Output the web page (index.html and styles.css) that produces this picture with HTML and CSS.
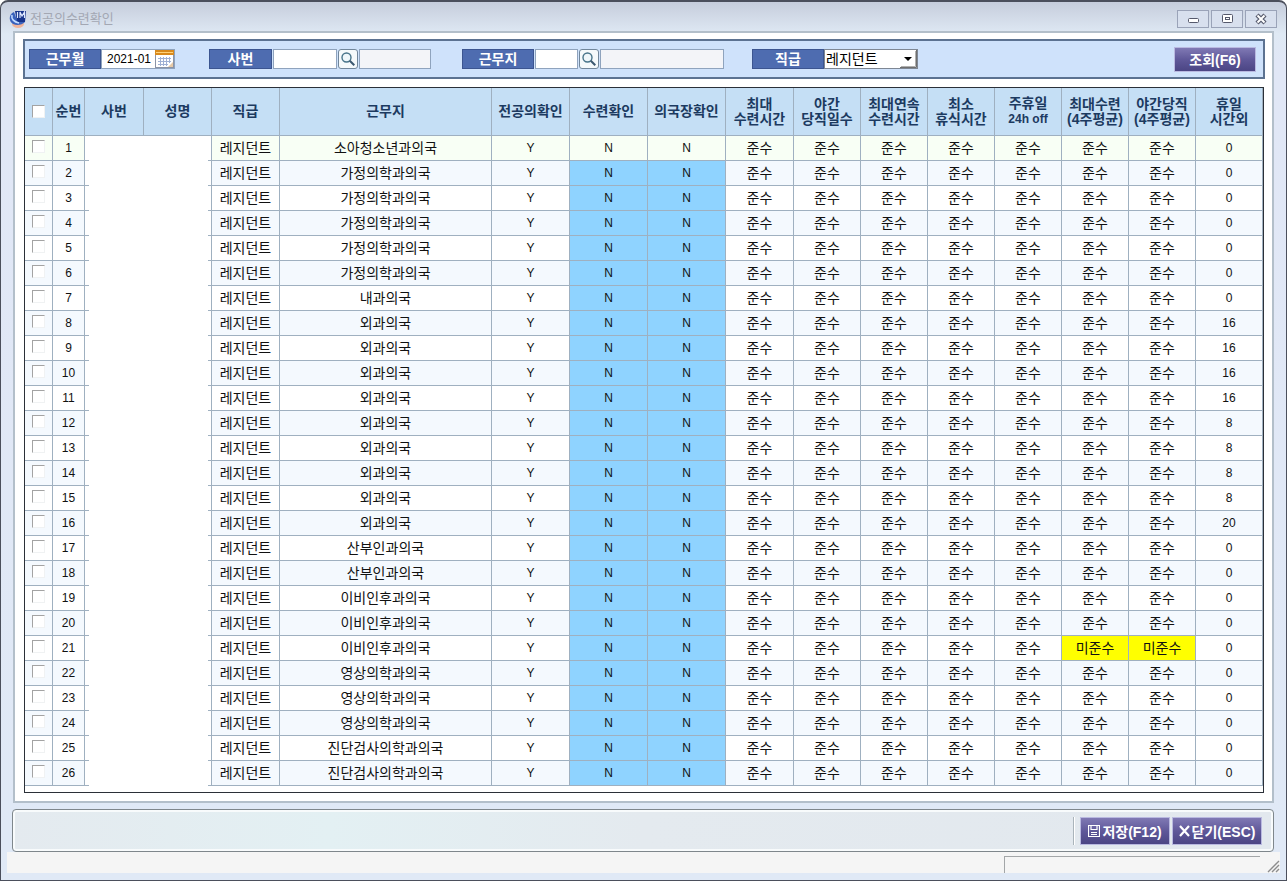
FILE: index.html
```html
<!DOCTYPE html>
<html lang="ko">
<head>
<meta charset="utf-8">
<title>전공의수련확인</title>
<link rel="stylesheet" href="styles.css">
</head>
<body>
<div class="window">
  <header class="titlebar">
    <svg class="app-icon" width="18" height="18" viewBox="0 0 18 18" aria-hidden="true">
      <ellipse cx="9" cy="14" rx="6" ry="4" fill="#f0b49a"/>
      <path d="M5 2C0 4-1 11 4 14c4 2 9 1 12-2L8 10z" fill="#3a62bd"/>
      <path d="M6 1h11l-1 11H8z" fill="#17348c"/>
      <path d="M8.500 2v6M11 8V2l2 4 2.500-4v6" stroke="#dfe8ff" stroke-width="1.200" fill="none"/>
      <path d="M3 5c-1 4 2 7 7 8" stroke="#c4dcff" stroke-width="1.600" fill="none"/>
    </svg>
    <h1 class="title">전공의수련확인</h1>
    <div class="win-buttons">
      <button class="win-btn" type="button" aria-label="최소화"><svg width="14" height="12" viewBox="0 0 14 12"><rect x="2.500" y="5.500" width="10" height="4" rx="1" fill="#fff" stroke="#55596c"/></svg></button>
      <button class="win-btn" type="button" aria-label="최대화"><svg width="14" height="12" viewBox="0 0 14 12"><rect x="2.500" y="1.500" width="10" height="8" rx="1" fill="#fff" stroke="#55596c"/><rect x="5.500" y="4.500" width="4" height="2" fill="#fff" stroke="#55596c"/></svg></button>
      <button class="win-btn" type="button" aria-label="닫기"><svg width="14" height="12" viewBox="0 0 14 12"><path d="M3 2l8 8M11 2l-8 8" stroke="#55596c" stroke-width="4.400"/><path d="M3.500 2.500l7 7M10.500 2.500l-7 7" stroke="#fff" stroke-width="2"/></svg></button>
    </div>
  </header>

  <main class="content">
    <form class="filters">
      <div class="field gap-a">
        <label class="tag" for="month">근무월</label>
        <div class="date-box">
          <input id="month" class="date-input" type="text" value="2021-01">
          <button class="cal-btn" type="button" aria-label="달력"><svg width="19" height="18" viewBox="0 0 19 18"><rect x=".5" y=".5" width="18" height="17" fill="#fff" stroke="#8b93a6"/><path d="M0 0h19v5H0z" fill="#d98a1c"/><path d="M1 2h17v1H1z" fill="#ffd27a"/><path d="M3 8.500h13M3 11.500h13M3 14.500h10M5.500 7v9M8.500 7v9M11.500 7v9M14.500 7v6" stroke="#9fb0d4"/><path d="M13 17l5-5v5z" fill="#e7c9a6"/></svg></button>
        </div>
      </div>
      <div class="field gap-b">
        <label class="tag tag-short" for="emp">사번</label>
        <input id="emp" class="box w-emp" type="text">
        <button class="find" type="button" aria-label="사번 검색"><svg width="16" height="16" viewBox="0 0 16 16"><circle cx="6.500" cy="6.500" r="4.500" fill="#eef6fa" stroke="#477389" stroke-width="1.400"/><path d="M9.800 9.800l4.500 4.500" stroke="#3c5870" stroke-width="2"/></svg></button>
        <input class="box w-name" type="text" aria-label="사번 이름" readonly>
      </div>
      <div class="field gap-c">
        <label class="tag" for="place">근무지</label>
        <input id="place" class="box w-place" type="text">
        <button class="find" type="button" aria-label="근무지 검색"><svg width="16" height="16" viewBox="0 0 16 16"><circle cx="6.500" cy="6.500" r="4.500" fill="#eef6fa" stroke="#477389" stroke-width="1.400"/><path d="M9.800 9.800l4.500 4.500" stroke="#3c5870" stroke-width="2"/></svg></button>
        <input class="box w-place-name" type="text" aria-label="근무지 이름" readonly>
      </div>
      <div class="field">
        <label class="tag" for="rank">직급</label>
        <span class="select-wrap">
          <select id="rank" class="select"><option>레지던트</option></select>
          <svg class="select-arrow" width="17" height="18" viewBox="0 0 17 18" aria-hidden="true"><path d="M0 0h17v18H0z" fill="#fff"/><path d="M0 17.500h16.500V0" stroke="#6f6f6f" fill="none"/><path d="M1 16.500h14.500V1" stroke="#b0b0b0" fill="none"/><path d="M4 7h8l-4 4z" fill="#000"/></svg>
        </span>
      </div>
      <button class="action search-btn" type="button">조회(F6)</button>
    </form>

    <div class="grid">
      <table class="table">
        <colgroup>
          <col class="c-check"><col class="c-no"><col class="c-emp"><col class="c-rank"><col class="c-rank"><col>
          <col class="c-conf"><col class="c-conf"><col class="c-conf"><col class="c-rank">
          <col class="c-rule"><col class="c-rule"><col class="c-rule"><col class="c-rule"><col class="c-rule"><col class="c-rule"><col class="c-rule">
        </colgroup>
        <thead>
          <tr>
            <th><input class="check check-all" type="checkbox" aria-label="전체 선택"></th>
            <th>순번</th><th>사번</th><th>성명</th><th>직급</th><th>근무지</th>
            <th>전공의확인</th><th>수련확인</th><th>의국장확인</th>
            <th>최대<br>수련시간</th><th>야간<br>당직일수</th><th>최대연속<br>수련시간</th><th>최소<br>휴식시간</th>
            <th>주휴일<br><span class="latin">24h off</span></th><th>최대수련<br>(4주평균)</th><th>야간당직<br>(4주평균)</th><th>휴일<br>시간외</th>
          </tr>
        </thead>
        <tbody id="rows"></tbody>
      </table>
    </div>
  </main>

  <footer class="toolbar">
    <span class="divider"></span>
    <button class="action" type="button"><svg width="12" height="12" viewBox="0 0 12 12" aria-hidden="true"><path d="M.5.5h11v11H.5zM3 .5v4h6v-4M3 7.500h6M3 9.500h6" fill="none" stroke="#fff" stroke-width="1.200"/></svg>저장(F12)</button>
    <button class="action" type="button"><svg width="11" height="12" viewBox="0 0 11 12" aria-hidden="true"><path d="M1 1l9 10M10 1L1 11" stroke="#fff" stroke-width="2.200"/></svg>닫기(ESC)</button>
  </footer>
  <div class="statusbar">
    <div class="status-box"></div>
    <svg class="grip" width="14" height="14" viewBox="0 0 14 14" aria-hidden="true"><path d="M2 13L13 2M6 13l7-7M10 13l3-3" stroke="#8d8d8d" stroke-width="1.400"/></svg>
  </div>
</div>
<script src="script.js"></script>
</body>
</html>
```
FILE: styles.css
```css
* { box-sizing: border-box; }

body {
  margin: 0;
  background: #fff;
  color: #111;
  font-family: "Liberation Sans", "Noto Sans CJK KR", sans-serif;
  font-size: 14px;
}

button, input, select { font: inherit; margin: 0; padding: 0; border-radius: 0; }

.window {
  display: flex;
  flex-direction: column;
  min-height: 100vh;
  padding: 0 12px 7px;
  border: 1px solid #4b4f5c;
  border-top-width: 2px;
  border-radius: 8px 8px 0 0;
  background: linear-gradient(#c6cddc, #dfe9f4 32px, #e1e7f6 60px, #e0e9f6);
}

.titlebar {
  display: flex;
  align-items: center;
  height: 29px;
  margin-left: -4px;
  padding-top: 4px;
}
.title {
  flex: 1;
  margin: 0 0 0 3px;
  color: #a3a7b3;
  font-size: 13px;
  font-weight: 400;
  line-height: 16px;
}
.win-buttons { display: flex; gap: 2px; margin-right: -3px; }
.win-btn {
  display: flex;
  align-items: center;
  justify-content: center;
  width: 32px;
  height: 18px;
  border: 1px solid #9aa3b8;
  background: #d8e0ee;
}

.content {
  flex: 1;
  padding: 6px 7px 8px 8px;
  border: 2px solid #b3bfca;
  background: #fff;
}

.filters {
  display: flex;
  align-items: center;
  height: 40px;
  padding: 0 7px 0 4px;
  border: 2px solid #5c7291;
  background: #cfe2fb;
}
.field { display: flex; align-items: center; }
.gap-a { margin-right: 34px; }
.gap-b { margin-right: 31px; }
.gap-c { margin-right: 28px; }
.tag {
  width: 72px;
  height: 20px;
  border: 1px solid #3c5590;
  background: #4e6cb0;
  color: #fff;
  font-weight: 700;
  line-height: 18px;
  text-align: center;
}
.tag-short { width: 63px; }
.box {
  height: 20px;
  margin-left: 1px;
  border: 1px solid #8fa3bd;
  background: #fff;
}
.box[readonly] { background: #f3f4f8; }
.w-emp { width: 64px; }
.w-name { width: 72px; }
.w-place { width: 43px; }
.w-place-name { width: 124px; }
.date-box {
  display: flex;
  width: 74px;
  height: 20px;
  border: 1px solid #8fa3bd;
  background: #fff;
}
.date-input {
  flex: 1;
  min-width: 0;
  padding-left: 5px;
  border: 0;
  background: transparent;
  font-size: 12px;
}
.cal-btn { display: flex; border: 0; background: none; }
.find {
  display: flex;
  align-items: center;
  justify-content: center;
  width: 20px;
  height: 20px;
  margin-left: 1px;
  border: 1px solid #71869b;
  border-radius: 3px;
  background: #f5f9fb;
}
.select-wrap { position: relative; display: flex; }
.select {
  width: 94px;
  height: 20px;
  padding-left: 1px;
  border: 1px solid #7e8794;
  background: #fff;
  appearance: none;
}
.select-arrow { position: absolute; top: 1px; right: 1px; pointer-events: none; }

.action {
  display: flex;
  align-items: center;
  justify-content: center;
  gap: 2px;
  width: 90px;
  height: 28px;
  border: 1px solid #7d73b8;
  outline: 1px solid #b9b9e0;
  outline-offset: -1px;
  background: linear-gradient(#8079b4, #5f5899 50%, #4b4584);
  color: #fff;
  font-weight: 700;
  white-space: nowrap;
}
.search-btn { width: 82px; height: 25px; margin-left: auto; }

.grid {
  margin: 8px 1px 0;
  padding-bottom: 6px;
  border: 1px solid #2b3038;
}
.table {
  width: 100%;
  border-collapse: separate;
  border-spacing: 0;
  table-layout: fixed;
}
.c-check { width: 28px; }
.c-no { width: 32px; }
.c-emp { width: 59px; }
.c-rank { width: 68px; }
.c-conf { width: 78px; }
.c-rule { width: 67px; }

.table th, .table td {
  padding: 0;
  border-right: 1px solid #9fb0c0;
  border-bottom: 1px solid #9fb0c0;
  text-align: center;
  white-space: nowrap;
}
.table th {
  height: 48px;
  background: #c5dff5;
  color: #1c3a60;
  line-height: 15px;
}
.table td { height: 25px; line-height: 20px; }
.table .num, .latin { font-size: 12px; }
.table tr:nth-child(even) td { background: #f4f9fe; }
.table tr.current td { background: #f8fff5; }
.table td.pending, .table tr:nth-child(even) td.pending { background: #8fd3ff; }
.table td.violation { background: #ff0; }

/* Hidden personal data: only short ends of the row line show at each side. */
.table tr td.masked, .table tr:nth-child(even) td.masked {
  border-bottom: 0;
  background:
    linear-gradient(#9fb0c0, #9fb0c0) left bottom / 4px 1px no-repeat,
    linear-gradient(#9fb0c0, #9fb0c0) right bottom / 3px 1px no-repeat,
    #fff;
}

.check {
  display: block;
  width: 13px;
  height: 13px;
  margin: 0 auto 4px;
  border: 1px solid #f0f2f3;
  border-top-color: #a3a3a3;
  border-left-color: #a3a3a3;
  background: #fff;
  appearance: none;
}
.check-all { margin: 0 auto; }

.toolbar {
  display: flex;
  align-items: center;
  justify-content: flex-end;
  gap: 2px;
  height: 43px;
  margin: 6px 0 0 -1px;
  padding: 0 11px;
  border: 1px solid #7f878c;
  border-radius: 4px;
  background: linear-gradient(90deg, #e4eaef, #e3f0f3 25%, #e4eaef 50%, #e2e8ee);
  box-shadow: inset 0 0 0 2px #f8fbfc;
}
.divider {
  width: 2px;
  height: 28px;
  margin-right: 3px;
  border-left: 1px solid #aab4bb;
  border-right: 1px solid #fff;
}

.statusbar {
  display: flex;
  align-items: flex-end;
  justify-content: flex-end;
  height: 21px;
  margin: 0 -6px;
  background: #f5f5f5;
}
.status-box {
  width: 256px;
  height: 17px;
  border: 1px solid #a3a6a8;
  border-right: 0;
  border-bottom: 0;
}
.grip { margin: 0 0 0 6px; }
```
FILE: script.js
```js
const places = [
  ["소아청소년과의국", 1], ["가정의학과의국", 5], ["내과의국", 1], ["외과의국", 9],
  ["산부인과의국", 2], ["이비인후과의국", 3], ["영상의학과의국", 3], ["진단검사의학과의국", 2]
].flatMap(([name, count]) => Array(count).fill(name));

const overtime = { 8: 16, 9: 16, 10: 16, 11: 16, 12: 8, 13: 8, 14: 8, 15: 8, 16: 20 };
const violations = { 21: [5, 6] };

document.getElementById("rows").innerHTML = places.map((place, i) => {
  const no = i + 1;
  const confirm = no === 1 ? "num" : "num pending";
  const rules = Array.from({ length: 7 }, (_, k) =>
    (violations[no] || []).includes(k) ? '<td class="violation">미준수</td>' : "<td>준수</td>"
  ).join("");
  return `<tr class="${no === 1 ? "current" : ""}">
    <td><input class="check" type="checkbox" aria-label="${no}행 선택"></td>
    <td class="num">${no}</td><td class="masked" colspan="2"></td>
    <td>레지던트</td><td>${place}</td><td class="num">Y</td>
    <td class="${confirm}">N</td><td class="${confirm}">N</td>
    ${rules}
    <td class="num">${overtime[no] || 0}</td></tr>`;
}).join("");
```
